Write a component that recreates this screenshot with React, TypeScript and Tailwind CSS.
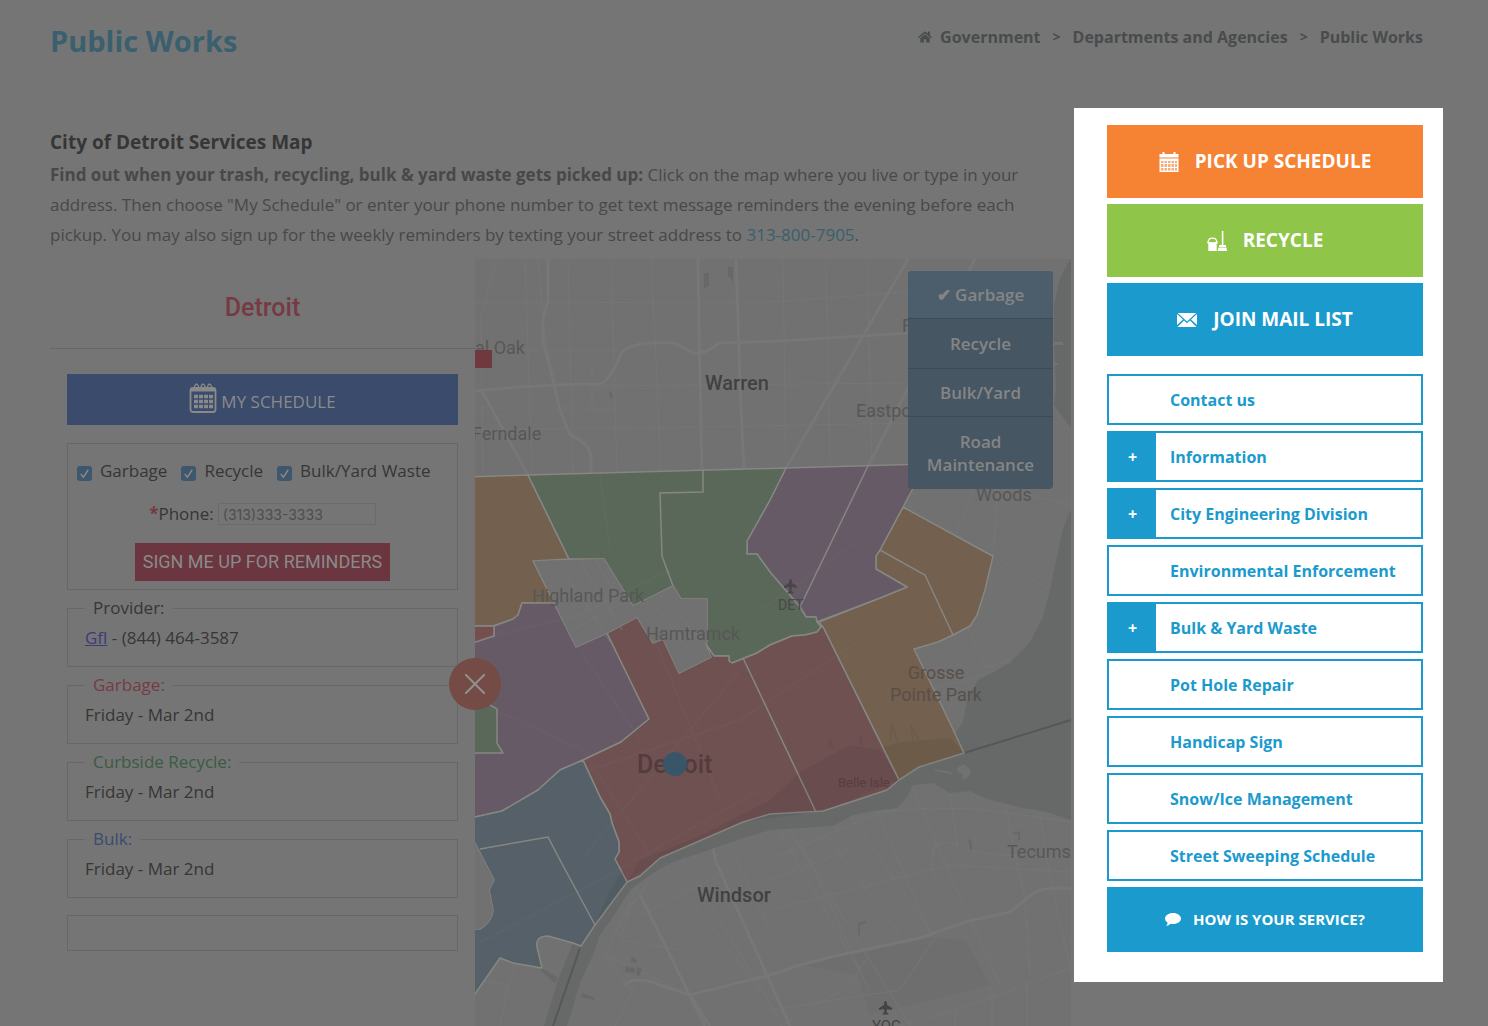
import React from "react";
import { FaHome } from "react-icons/fa";

const roads: string[] = [
  "M548 259V300L543 318V340L553 380L560 410L570 435Q588 442 591 455V475",
  "M475 391Q540 384 600 384Q610 381 622 352Q628 345 650 343H675L693 353Q705 355 719 343L780 341L908 333",
  "M698 259L699 330L702 470",
  "M736 259L741 410L744 470",
  "M482 391L528 475",
  "M908 259L786 468",
  "M975 259L868 466",
  "M640 895L705 1026",
  "M711 840L716 862L757 953L790 1026",
  "M625 985Q635 975 660 985L690 995L770 975L800 965L835 956L920 938L965 922L1010 912L1035 892Q1050 886 1071 889",
  "M690 995L710 1026",
];

const streets: string[] = [
  "M538 259L544 330L556 384",
  "M568 259L573 475M611 259L617 475M651 259L658 400L660 475M525 259L532 475",
  "M783 259L786 468M826 259L830 466M867 259L872 466",
  "M475 303L770 302L908 292M475 350H620M475 408H616M475 430L700 427L908 423M590 386L908 383",
  "M497 259L481 316L483 475M475 328H550M592 365V410H616",
  "M475 979L508 985L516 960M508 985L500 1026M770 850L790 830L910 1026M780 832L870 990",
  "M822 830L900 935M850 815L930 930M877 811L930 933M912 785L935 840L975 930L1000 985M950 793L958 850",
  "M770 880L850 850M770 910L850 890L950 865L1071 872M770 1010L900 990L940 930",
  "M640 880L605 955L630 990M633 900L620 940L680 950M660 865L625 915M640 915L730 870",
  "M660 860L760 990M680 855L780 1020M730 845L770 930M605 955L690 995M615 1026L635 985",
  "M800 840L860 970M770 860L880 812L930 808L980 809L1071 822M932 853Q936 837 960 845Q970 853 1000 855L1071 858",
  "M935 840Q928 870 940 885M1005 805L1025 900L1030 975M1040 812L1050 880L1071 970",
  "M780 1026L850 985L865 960M900 1026L985 1000L1071 968M955 1010V1026M992 987V1026M1027 980V1026",
  "M975 488L955 535M998 488L993 556M1000 560L1050 590M968 628L986 668L1010 660",
  "M930 690L1000 670M908 488L940 520M1010 490L1071 505M575 600L613 570L630 590M550 565L595 640",
];

function ServicesMap() {
  return (
    <svg
      role="img"
      aria-label="Detroit services map"
      viewBox="475 259 596 767"
      preserveAspectRatio="xMidYMin slice"
      className="absolute inset-0 h-full w-full"
      fontFamily="Roboto, sans-serif"
    >
      <rect x="475" y="259" width="596" height="767" fill="#717171" />
      <path d="M800 965L930 938L965 940L990 985L870 1015L858 975Z" fill="#6e6e6e" />
      <g fill="none" stroke="#767676" strokeWidth="1">
        {streets.map((d) => (
          <path key={d} d={d} />
        ))}
      </g>
      <g fill="none" stroke="#777777" strokeWidth="3" strokeLinejoin="round">
        {roads.map((d) => (
          <path key={d} d={d} />
        ))}
      </g>
      <g fill="#666967">
        <path d="M1071 258L1060 278L1054 305V340L1056 388L1054 405L1071 428ZM1071 510L1063 528L1050 590L1043 617L1030 642L1010 663L978 680L967 700L963 722L953 737L964 753L919 767L899 780L887 790L823 811L770 814L743 822L660 858L640 876L627 882L595 925L573 943L558 980L544 1026H567L572 1010L580 983L592 957L600 935L613 917L630 890L650 875L670 863L703 852L737 840L770 830L833 826L853 815L873 811L897 808L907 797L913 785L933 783L950 793L970 791L987 799L1023 808L1047 812L1071 820Z" />
        <path d="M704 273h5v13l-5 2zM728 267h5v14h-2v-4h-3zM609 391l3 2v5h-2zM632 957l5 3-1 3-6-1zM625 966l10 2v5l-10-1zM637 967l5 2-3 7-3-2z" />
        <path d="M542 968L558 978L555 983L540 970ZM582 993L595 998L594 1000L581 997ZM1012 833l8-2v9h-2v-6h-6zM968 838l4 4v8h-2z" />
        <path d="M858 923l8-2v2l-6 2v10h-2z" />
      </g>
      <path d="M934 769l12 2 8 2-4 1-15-3zM957 768l6-4 7 4 1 5-5 6-4 1 1-5-5-3z" fill="#717171" />
      <path d="M1054 342h9v3h-9zM1054 362l5 2-5 2z" fill="#747474" />
      <path d="M964 753L1071 720M580 948L553 1026" fill="none" stroke="#575757" strokeWidth="2" />

      <g stroke="#868682" strokeWidth="1.5" strokeLinejoin="round">
        <path fill="#73604e" d="M470 477L528 475L569 559L533 561L554 603H522L518 615L513 619L493 626H470Z" />
        <path fill="#73604e" d="M903 507L987 553L993 556L985 590L977 615L970 626L953 635L938 642L914 649L950 723L964 753L919 767L899 780L823 627L819 622L880 598L907 587L876 569V556L880 550Z" />
        <path fill="#655a66" d="M494 626L513 619L518 615L522 603H554L576 647L607 633L649 719L621 742L583 760L560 770L538 790L502 811L470 818V640L494 636Z" />
        <path fill="#744f50" d="M470 626H494V636L470 644Z" />
        <path fill="#5a685a" d="M470 697L490 705L497 709V743L503 753H470Z" />
        <path fill="#655a66" d="M786 468L926 464L903 507L880 550L876 556V569L907 587L880 598L817 622L816 617H806L800 607L770 572L757 554H747V541L770 500Z" />
        <path fill="#5a685a" d="M528 475L786 468L770 500L747 541V554H757L770 572L800 607L806 617H816L817 622L821 627L817 632L805 635L792 636L770 645L757 653L732 663L729 661V656H714L705 643L707 642V599H681L673 586L633 606L604 559H569Z" />
        <path fill="#6f5152" d="M583 760L621 742L649 719L607 633L637 617L653 643L663 639L679 673L711 657L705 643L714 656H729V661L732 663L757 653L770 645L792 636L805 635L817 632L821 627L823 627L899 780L887 790L857 800L823 811L770 814L743 822L660 858L640 876L627 882L615 859L619 852V842L612 823L610 814L600 797Z" />
        <path fill="#566068" d="M470 818L502 811L538 790L560 770L583 760L600 797L610 814L612 823L619 842V852L615 859L627 882L595 925L587 937L581 946L573 943L548 936Q535 936 537 947L542 968L513 963L500 958L470 1001V929H480Q492 922 493 910L489 890L494 880L475 843H470Z" />
      </g>
      <path d="M475 843L494 880L489 890L493 910Q492 922 480 929H475Z" fill="#717171" />
      <path d="M534 561L604 559L633 606L673 586L681 599H707V642L705 643L711 657L679 673L663 639L653 643L637 617L607 633L576 647Z" fill="#717171" />
      <path d="M703 470V492L660 493L662 556L673 586M868 466L800 607M880 550L925 575L953 635M743 658L816 812M480 849L548 837L560 860L595 925" fill="none" stroke="#868682" strokeWidth="1.5" />
      <path d="M627 882L640 860L700 836L770 800L800 772L850 745L880 750L899 780L823 811L743 822L660 858ZM883 747L900 742L950 738L964 753L919 767L899 780ZM595 925L610 890L623 870L627 882Z" fill="#000000" fillOpacity="0.05" />
      <path d="M830 748v-9l3 9M860 745v-10l3 10M890 742l2-20 5 20M913 740l-2-15 8 15" fill="none" stroke="#000000" strokeOpacity="0.04" strokeWidth="2" />
      <g fill="none" stroke="#ffffff" strokeOpacity="0.02" strokeWidth="2">
        <path d="M500 712L583 750L660 870M475 640L580 615L670 570M580 650L640 740M585 855L740 670M590 770L740 720L860 640M475 945L600 880L760 790M655 640L720 800M760 610L860 540M600 475L610 550" />
      </g>

      <path d="M564 572L610 642M581 563L622 630M595 559L618 598M576 628L622 603M650 600L690 652M664 593L702 645" fill="none" stroke="#767676" strokeWidth="1" />

      <g fill="#575757" fontSize="18">
        <text x="475" y="354">al Oak</text>
        <text x="472" y="440">Ferndale</text>
        <text x="856" y="417">Eastpointe</text>
        <text x="902" y="332">Fraser</text>
        <text x="976" y="501">Woods</text>
        <text x="532" y="602">Highland Park</text>
        <text x="646" y="640">Hamtramck</text>
        <text x="1007" y="858">Tecumseh</text>
      </g>
      <g fill="#584f4a" fontSize="18" textAnchor="middle">
        <text x="936" y="679">Grosse</text>
        <text x="936" y="701">Pointe Park</text>
      </g>
      <g fill="#414141" fontSize="20" fontWeight="500">
        <text x="705" y="390">Warren</text>
        <text x="697" y="902">Windsor</text>
      </g>
      <text x="637" y="773" fontSize="25" fontWeight="500" fill="#533b3e">Detroit</text>
      <text x="838" y="787" fontSize="13" fill="#573d40">Belle Isle</text>
      <text x="778" y="610" fontSize="14" fill="#4b474b">DET</text>
      <text x="872" y="1031" fontSize="15" fill="#444444">YQG</text>
      <path d="M790.5 579q1.500 0 1.500 4l5 3v2l-5-1-.5 4 2 1.500v1h-6v-1l2-1.500-.5-4-5 1v-2l5-3q0-4 1.500-4z" fill="#4b444b" />
      <path d="M885.5 1001q1.500 0 1.500 4l5 3v2l-5-1-.5 3 2 1.500v1h-6v-1l2-1.500-.5-3-5 1v-2l5-3q0-4 1.500-4z" fill="#444444" />
      <rect x="475" y="350" width="17" height="18" fill="#6f393f" />
      <circle cx="675" cy="764" r="12" fill="#395668" />
    </svg>
  );
}

function CalendarSolid() {
  return (
    <svg viewBox="0 0 20 20" className="h-5 w-5" aria-hidden="true">
      <path fill="currentColor" fillRule="evenodd" d="M.5 2H3.500V0H5.500V2H14.500V0H16.500V2H19.500V5.500H.5zM.5 6.500H19.500V20H.5zM2 9V11H4.500V9zM5.500 9V11H8V9zM9 9V11H11.500V9zM12.500 9V11H15V9zM16 9V11H18V9zM2 12V15H4.500V12zM5.500 12V15H8V12zM9 12V15H11.500V12zM12.500 12V15H15V12zM16 12V15H18V12zM2 16V18.500H4.500V16zM5.500 16V18.500H8V16zM9 16V18.500H11.500V16zM12.500 16V18.500H15V16zM16 16V18.500H18V16z" />
      <path fill="#ffffff" fillOpacity="0.35" d="M2 9H18V18.500H2z" />
    </svg>
  );
}

function BucketBroom() {
  return (
    <svg viewBox="0 0 20 20" className="h-5 w-5" aria-hidden="true">
      <path d="M1.200 11Q1.500 7.200 5.500 7.200T9.800 11" fill="none" stroke="currentColor" strokeWidth="1.200" />
      <path fill="currentColor" d="M.3 10.200Q5.500 12.500 10.700 10.200V12L9.700 13V20H1.300V13L.3 12zM14.800 0h1.600v14h-1.600zM12 14h7v2h-7zM11.500 16.500h8l.5 3.500h-9.500z" />
    </svg>
  );
}

function Envelope() {
  return (
    <svg viewBox="0 0 20 14" className="h-[14px] w-5" aria-hidden="true">
      <path fill="currentColor" d="M.8 0H19.200L10 8.500zM0 1L6 6.500L0 12zM20 1V12L14 6.500zM7 7.500L10 10.200L13 7.500L19.500 14H.5z" />
    </svg>
  );
}

function Bubble() {
  return (
    <svg viewBox="0 0 16 13" className="h-[13px] w-4" aria-hidden="true">
      <path fill="currentColor" d="M8 0C12.500 0 16 2.500 16 5.500S12.500 11 8 11Q6.500 11 5.500 10.700Q4 12.500 1 13Q2.500 11.500 2.700 9.700Q0 8 0 5.500C0 2.500 3.500 0 8 0z" />
    </svg>
  );
}

function CalendarOutline() {
  return (
    <svg viewBox="0 0 28 30" className="h-[30px] w-7" aria-hidden="true" fill="none" stroke="currentColor">
      <rect x="1.500" y="5" width="25" height="24" rx="2.500" strokeWidth="1.800" />
      <path d="M2 7H26" strokeWidth="3" />
      <path d="M5.500 7V3.500Q7.500-1.500 9.500 3.500V7M12 7V3.500Q14-1.500 16 3.500V7M18.500 7V3.500Q20.500-1.500 22.500 3.500V7" strokeWidth="1.300" />
      <path d="M5 13.500h4m1 0h4m1 0h4m1 0h4M5 18.500h4m1 0h4m1 0h4m1 0h4M5 23.500h4m1 0h4m1 0h4m1 0h4" strokeWidth="3.300" />
    </svg>
  );
}

function Check({ label }: { label: string }) {
  return (
    <label className="flex items-center gap-2">
      <span className="relative mt-1 h-[15px] w-[15px]">
        <input type="checkbox" defaultChecked className="peer block h-[15px] w-[15px] appearance-none rounded-[3px] bg-[#3f576d]" />
        <svg viewBox="0 0 14 14" className="pointer-events-none absolute inset-0 hidden peer-checked:block" fill="none" stroke="#888888" strokeWidth="1.300" aria-hidden="true">
          <path d="M3.500 7.500L6 10.500L10.500 3.500" />
        </svg>
      </span>
      {label}
    </label>
  );
}

function Pickup({ title, color, children }: { title: string; color: string; children: React.ReactNode }) {
  return (
    <fieldset className="mt-[6px] border border-[#676767] px-[17px] pt-[6px] pb-4">
      <legend className={`px-2 leading-6 ${color}`}>{title}</legend>
      <p className="leading-6">{children}</p>
    </fieldset>
  );
}

const links = [
  { name: "Contact us", more: false },
  { name: "Information", more: true },
  { name: "City Engineering Division", more: true },
  { name: "Environmental Enforcement", more: false },
  { name: "Bulk & Yard Waste", more: true },
  { name: "Pot Hole Repair", more: false },
  { name: "Handicap Sign", more: false },
  { name: "Snow/Ice Management", more: false },
  { name: "Street Sweeping Schedule", more: false },
];

const bigButton = "flex h-[73px] items-center justify-center gap-4 text-[19px] font-bold text-white";

export default function App() {
  return (
    <div className="flex min-h-screen flex-col bg-[#757575] font-['Open_Sans',sans-serif] text-[#363636]">
      <header className="flex items-start justify-between pt-5 pr-[65px] pb-[47px] pl-[50px]">
        <h1 className="text-[29px] leading-[41px] font-bold text-[#3a5f6e]">Public Works</h1>
        <nav aria-label="Breadcrumb" className="flex items-center text-base leading-[34px] font-bold text-[#484c4c]">
          <FaHome className="mr-2 h-[14px] w-[14px]" aria-hidden="true" />
          <a href="#government">Government</a>
          <span className="mx-3 text-sm">&gt;</span>
          <a href="#departments">Departments and Agencies</a>
          <span className="mx-3 text-sm">&gt;</span>
          <a href="#public-works">Public Works</a>
        </nav>
      </header>

      <div className="flex flex-1 items-stretch gap-[3px] pr-[45px]">
        <main className="flex min-w-0 flex-1 flex-col">
          <section className="pt-[21px] pr-[46px] pb-[9px] pl-[50px]">
            <h2 className="text-[19px] leading-[27px] font-bold">City of Detroit Services Map</h2>
            <p className="mt-1 text-[17px] leading-[30px] text-[#484848]">
              <strong>Find out when your trash, recycling, bulk &amp; yard waste gets picked up:</strong> Click on the map where you live or type in your address. Then choose "My Schedule" or enter your phone number to get text message reminders the evening before each pickup. You may also sign up for the weekly reminders by texting your street address to{" "}
              <a href="tel:3138007905" className="text-[#3a5f6e]">313-800-7905</a>.
            </p>
          </section>

          <div className="flex flex-1">
            <section className="ml-[50px] w-[425px] shrink-0 pb-16 text-[17px]" aria-label="Schedule">
              <h3 className="border-b border-[#676767] pt-[31px] pb-[22px] text-center font-[Roboto,sans-serif] text-[25px] leading-9 font-medium text-[#763a45]">Detroit</h3>
              <div className="px-[17px] pt-[25px]">
                <button type="button" className="flex h-[51px] w-full items-center justify-center gap-1 bg-[#3b4b6b] text-[#8a8a8a]">
                  <span className="pb-1"><CalendarOutline /></span>
                  <span className="pt-1">MY SCHEDULE</span>
                </button>
                <form className="mt-[18px] border border-[#676767] px-[9px] pt-[15px] pb-2" onSubmit={(e) => e.preventDefault()}>
                  <div className="flex gap-[14px] leading-6">
                    <Check label="Garbage" />
                    <Check label="Recycle" />
                    <Check label="Bulk/Yard Waste" />
                  </div>
                  <div className="mt-[19px] flex items-center justify-center gap-1 leading-6">
                    <label htmlFor="phone"><span className="font-bold text-[#763a45]">*</span>Phone:</label>
                    <input id="phone" type="tel" placeholder="(313)333-3333" className="h-[22px] w-[158px] border border-[#6b6b6b] bg-transparent px-1 font-[Inter,sans-serif] text-sm placeholder:text-[#4d4d4d]" />
                  </div>
                  <button type="submit" className="mx-auto mt-[17px] block h-[38px] bg-[#6b363f] px-2 font-[Roboto,sans-serif] text-lg text-[#8a8a8a]">SIGN ME UP FOR REMINDERS</button>
                </form>
                <Pickup title="Provider:" color="text-[#363636]">
                  <a href="#gfl" className="text-[#3c3c78] underline">Gfl</a> - (844) 464-3587
                </Pickup>
                <Pickup title="Garbage:" color="text-[#763a45]">Friday - Mar 2nd</Pickup>
                <Pickup title="Curbside Recycle:" color="text-[#3a5c42]">Friday - Mar 2nd</Pickup>
                <Pickup title="Bulk:" color="text-[#3b4b70]">Friday - Mar 2nd</Pickup>
                <div className="mt-[17px] h-9 border border-[#676767]" />
              </div>
            </section>

            <section className="relative min-w-0 flex-1" aria-label="Map">
              <ServicesMap />
              <div className="absolute top-3 right-[18px] flex w-[145px] flex-col divide-y divide-[#3d4b57] overflow-hidden rounded-sm bg-[#465663] text-[17px] leading-[23px] font-semibold text-[#858585]">
                <button type="button" className="bg-[#4c5e6b] px-3 py-3">✔ Garbage</button>
                <button type="button" className="px-3 py-[13px]">Recycle</button>
                <button type="button" className="px-3 py-3">Bulk/Yard</button>
                <button type="button" className="px-3 py-[13px]">Road Maintenance</button>
              </div>
              <button type="button" aria-label="Close" className="absolute top-[399px] -left-[26px] flex h-[52px] w-[52px] items-center justify-center rounded-full bg-[#744b45]">
                <svg viewBox="0 0 20 20" className="h-5 w-5" stroke="#909090" strokeWidth="2" aria-hidden="true">
                  <path d="M0 0L20 20M20 0L0 20" />
                </svg>
              </button>
            </section>
          </div>
        </main>

        <aside className="w-[369px] shrink-0 self-start bg-white pt-[17px] pr-5 pb-[30px] pl-[33px]">
          <div className="flex flex-col gap-[6px]">
            <a href="#schedule" className={`${bigButton} bg-[#f68233]`}><CalendarSolid />PICK UP SCHEDULE</a>
            <a href="#recycle" className={`${bigButton} bg-[#8fc549]`}><BucketBroom />RECYCLE</a>
            <a href="#mail" className={`${bigButton} bg-[#1b9acd]`}><Envelope />JOIN MAIL LIST</a>
          </div>
          <ul className="mt-[18px] mb-[6px] flex flex-col gap-[6px] text-base font-bold text-[#1b9acd]">
            {links.map((l) => (
              <li key={l.name} className="flex h-[51px] border-2 border-[#1b9acd]">
                {l.more ? (
                  <button type="button" aria-label={`Expand ${l.name}`} className="w-[47px] bg-[#1b9acd] text-white">+</button>
                ) : (
                  <span className="w-[47px]" />
                )}
                <a href="#section" className="flex flex-1 items-center pl-[14px]">{l.name}</a>
              </li>
            ))}
          </ul>
          <a href="#feedback" className="flex h-[65px] items-center justify-center gap-3 bg-[#1b9acd] text-[15px] font-bold text-white"><Bubble />HOW IS YOUR SERVICE?</a>
        </aside>
      </div>
    </div>
  );
}
